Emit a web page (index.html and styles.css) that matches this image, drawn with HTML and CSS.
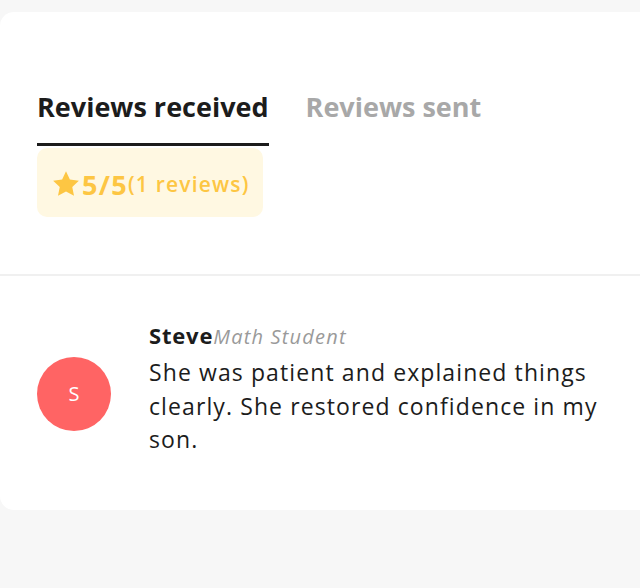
FILE: index.html
```html
<!DOCTYPE html>
<html>
<head>
<meta charset="utf-8">
<link rel="stylesheet" href="styles.css">
</head>
<body>
<div class="card">
  <div class="summary">
    <div class="tabs">
      <div class="tab active">Reviews received</div>
      <div class="tab">Reviews sent</div>
    </div>
    <div class="badge">
      <svg class="star" viewBox="0 0 24 24" width="30" height="30"><path d="M12 1.8l3.1 6.6 7.2.9-5.3 5 1.4 7.1L12 17.9l-6.4 3.5 1.4-7.1-5.3-5 7.2-.9z" fill="#fdc643"/></svg>
      <span class="score">5/5</span><span class="count">(1 reviews)</span>
    </div>
  </div>
  <div class="review">
    <div class="avatar">S</div>
    <div class="content">
      <div class="head"><span class="name">Steve</span><span class="role">Math Student</span></div>
      <p class="text">She was patient and explained things clearly. She restored confidence in my son.</p>
    </div>
  </div>
</div>
</body>
</html>
```
FILE: styles.css
```css
html, body {
  margin: 0;
  padding: 0;
  background: #f7f7f7;
  font-family: "Open Sans", "Liberation Sans", sans-serif;
  color: #1c1c1c;
}
.card {
  margin-top: 12px;
  width: 660px;
  height: 498px;
  background: #ffffff;
  border-radius: 14px;
}
.summary {
  padding: 80px 0 57px 37px;
  border-bottom: 2px solid #f0f0f0;
}
.tabs {
  display: flex;
  gap: 37px;
}
.tab {
  font-size: 27px;
  line-height: 30px;
  font-weight: 700;
  color: #a8a8a8;
  padding-bottom: 21px;
  letter-spacing: 0px;
}
.tab.active {
  color: #1c1c1c;
  border-bottom: 3px solid #1c1c1c;
}
.tab:not(.active) {
  padding-bottom: 24px;
}
.badge {
  margin-top: 2px;
  width: 226px;
  height: 69px;
  box-sizing: border-box;
  padding-left: 14px;
  padding-top: 3px;
  display: flex;
  align-items: center;
  background: #fff8e2;
  border-radius: 10px;
  color: #fdc643;
}
.star {
  display: block;
  margin-right: 1px;
}
.score {
  font-size: 27px;
  font-weight: 700;
  letter-spacing: 1.3px;
}
.count {
  font-size: 21px;
  font-weight: 600;
  letter-spacing: 1.2px;
}
.review {
  display: flex;
  align-items: center;
  gap: 38px;
  padding: 47px 30px 0 37px;
}
.avatar {
  flex: none;
  width: 74px;
  height: 74px;
  border-radius: 50%;
  background: #ff6464;
  color: #ffffff;
  font-size: 20px;
  display: flex;
  align-items: center;
  justify-content: center;
  margin-top: 8px;
}
.content {
  width: 455px;
}
.head {
  line-height: 24px;
  margin-bottom: 6px;
}
.name {
  font-size: 22px;
  font-weight: 700;
  letter-spacing: 0.8px;
}
.role {
  font-size: 20px;
  font-style: italic;
  color: #9a9a9a;
  letter-spacing: 1.2px;
}
.text {
  margin: 0;
  font-size: 23px;
  line-height: 33.5px;
  letter-spacing: 1.1px;
}
```
